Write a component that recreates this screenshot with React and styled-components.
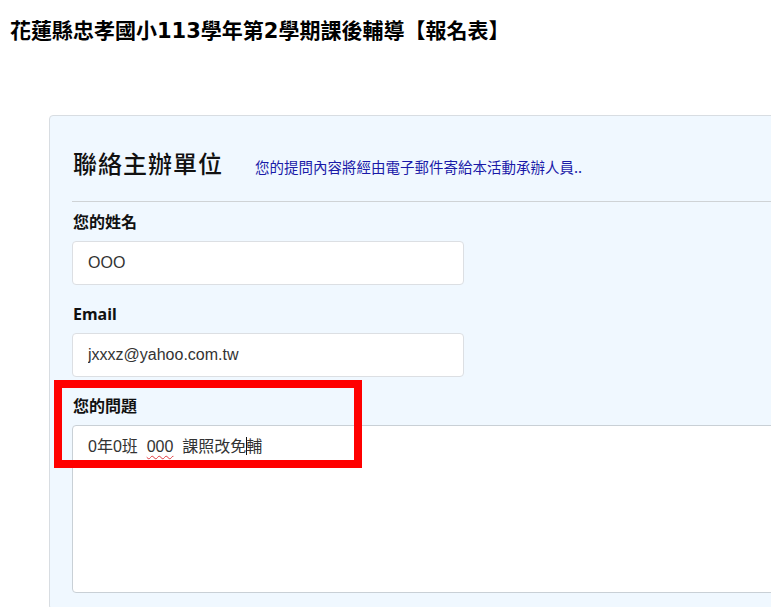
import React from 'react';
import styled, { createGlobalStyle } from 'styled-components';

const GlobalStyle = createGlobalStyle`
  html, body {
    margin: 0;
    padding: 0;
    background: #fff;
    overflow: hidden;
  }
  body {
    padding: 8px;
    font-family: "Noto Sans", "Noto Sans CJK TC", sans-serif;
  }
`;

const PageTitle = styled.h1`
  margin: 5px 0 0 2px;
  font-family: "DejaVu Sans", "Noto Sans CJK TC", sans-serif;
  font-size: 21px;
  line-height: 36px;
  font-weight: 700;
  color: #000;
  white-space: nowrap;
`;

const Stage = styled.div`
  position: relative;
  margin: 66px 0 0 41px;
`;

const Card = styled.section`
  width: 900px;
  box-sizing: border-box;
  padding: 30px 24px 16px 22px;
  background: #f0f8ff;
  border: 1px solid #d8dde2;
  border-radius: 4px;
`;

const CardHead = styled.div`
  display: flex;
  align-items: baseline;
  gap: 32px;
  padding: 0 0 21px 1px;
  border-bottom: 1px solid #cfd3d6;
`;

const CardTitle = styled.h2`
  margin: 0;
  font-family: "Noto Sans CJK TC", sans-serif;
  font-size: 24px;
  line-height: 34px;
  font-weight: 500;
  letter-spacing: 1px;
  color: #111;
`;

const Note = styled.span`
  font-family: "Noto Sans CJK TC", sans-serif;
  font-size: 14.5px;
  color: #1a1aa8;
`;

const Field = styled.div`
  display: flex;
  flex-direction: column;
  gap: 7px;
  margin-top: ${p => (p.$first ? '8px' : '17px')};
`;

const Label = styled.label`
  padding-left: 1px;
  font-family: "Noto Sans", "Noto Sans CJK TC", sans-serif;
  font-size: 16px;
  line-height: 24px;
  font-weight: 700;
  color: #111;
`;

const Input = styled.input`
  width: 392px;
  height: 44px;
  box-sizing: border-box;
  padding: 0 15px;
  border: 1px solid #dcdfe3;
  border-radius: 4px;
  background: #fff;
  font-family: "Liberation Sans", "Noto Sans CJK TC", sans-serif;
  font-size: 16px;
  color: #333;
  outline: none;
`;

const TextBox = styled.div`
  width: 100%;
  height: 168px;
  box-sizing: border-box;
  padding: 10px 15px;
  border: 1px solid #c9d0d6;
  border-radius: 4px;
  background: #fff;
  font-family: "Liberation Sans", "Noto Sans CJK TC", sans-serif;
  font-size: 16px;
  line-height: 22px;
  color: #333;
  white-space: pre;
`;

const Misspelled = styled.span`
  text-decoration: underline wavy #e0393e;
  text-underline-offset: 3px;
  text-decoration-thickness: 1px;
`;

const Caret = styled.span`
  display: inline-block;
  width: 1px;
  height: 18px;
  margin: 0 -1px 0 0;
  vertical-align: -3px;
  background: #111;
`;

const Highlight = styled.div`
  position: absolute;
  left: 5px;
  top: 265px;
  width: 308px;
  height: 88px;
  box-sizing: border-box;
  border: 8px solid #ff0000;
  pointer-events: none;
`;

export default function App() {
  return (
    <>
      <GlobalStyle />
      <PageTitle>花蓮縣忠孝國小113學年第2學期課後輔導【報名表】</PageTitle>
      <Stage>
        <Card>
          <CardHead>
            <CardTitle>聯絡主辦單位</CardTitle>
            <Note>您的提問內容將經由電子郵件寄給本活動承辦人員..</Note>
          </CardHead>
          <Field $first>
            <Label htmlFor="name">您的姓名</Label>
            <Input id="name" defaultValue="OOO" readOnly />
          </Field>
          <Field>
            <Label htmlFor="email">Email</Label>
            <Input id="email" defaultValue="jxxxz@yahoo.com.tw" readOnly />
          </Field>
          <Field>
            <Label>您的問題</Label>
            <TextBox>
              0年0班  <Misspelled>000</Misspelled>  課照改免<Caret />輔
            </TextBox>
          </Field>
        </Card>
        <Highlight />
      </Stage>
    </>
  );
}
